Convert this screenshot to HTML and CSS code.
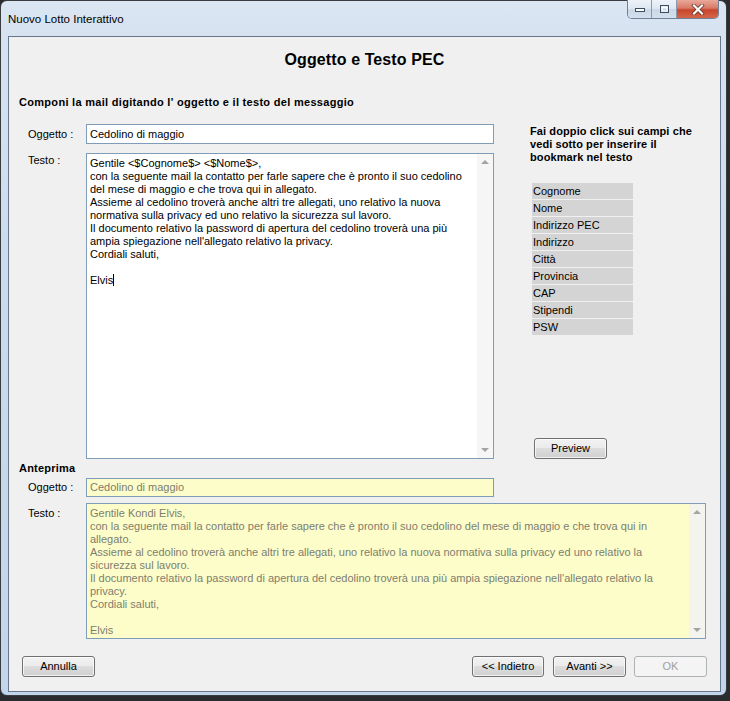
FILE: index.html
```html
<!DOCTYPE html>
<html lang="it">
<head>
<meta charset="utf-8">
<title>Nuovo Lotto Interattivo</title>
<link rel="stylesheet" href="styles.css">
</head>
<body>
<div class="window">
  <div class="titlebar">
    <div class="title">Nuovo Lotto Interattivo</div>
    <div class="caption">
      <div class="cbtn cmin"><svg width="12" height="8" viewBox="0 0 12 8"><rect x="1.5" y="3.5" width="9" height="3" fill="#fff" stroke="#3d4e63"/></svg></div>
      <div class="cbtn cmax"><svg width="11" height="10" viewBox="0 0 11 10"><rect x="1.5" y="1.5" width="8" height="7" fill="none" stroke="#3d4e63"/><rect x="3" y="3.5" width="5" height="3.5" fill="none" stroke="#fff"/></svg></div>
      <div class="cbtn cclose"><svg width="14" height="11" viewBox="0 0 14 11"><path d="M3 1.5 L11 9.5 M11 1.5 L3 9.5" stroke="#5a2a20" stroke-width="3.6" stroke-linecap="square"/><path d="M3 1.5 L11 9.5 M11 1.5 L3 9.5" stroke="#fff" stroke-width="2.2" stroke-linecap="square"/></svg></div>
    </div>
  </div>
  <div class="client">
    <h1 class="heading">Oggetto e Testo PEC</h1>
    <div class="subheading">Componi la mail digitando l' oggetto e il testo del messaggio</div>

    <div class="top">
      <div class="form">
        <div class="row">
          <div class="label lbl-obj">Oggetto :</div>
          <div class="input">Cedolino di maggio</div>
        </div>
        <div class="row row-text">
          <div class="label lbl-text">Testo :</div>
          <div class="textarea">
            <div class="content">
              <div class="line">Gentile &lt;$Cognome$&gt; &lt;$Nome$&gt;,</div>
              <div class="line">con la seguente mail la contatto per farle sapere che è pronto il suo cedolino</div>
              <div class="line">del mese di maggio e che trova qui in allegato.</div>
              <div class="line">Assieme al cedolino troverà anche altri tre allegati, uno relativo la nuova</div>
              <div class="line">normativa sulla privacy ed uno relativo la sicurezza sul lavoro.</div>
              <div class="line">Il documento relativo la password di apertura del cedolino troverà una più</div>
              <div class="line">ampia spiegazione nell'allegato relativo la privacy.</div>
              <div class="line">Cordiali saluti,</div>
              <div class="line"> </div>
              <div class="line"><span class="caret">Elvis</span></div>
            </div>
            <div class="scrollbar"><span class="arrow up"></span><span class="arrow down"></span></div>
          </div>
        </div>
      </div>
      <div class="side">
        <div class="hint">Fai doppio click sui campi che<br>vedi sotto per inserire il<br>bookmark nel testo</div>
        <ul class="fields">
          <li>Cognome</li>
          <li>Nome</li>
          <li>Indirizzo PEC</li>
          <li>Indirizzo</li>
          <li>Città</li>
          <li>Provincia</li>
          <li>CAP</li>
          <li>Stipendi</li>
          <li>PSW</li>
        </ul>
        <div class="btn preview">Preview</div>
      </div>
    </div>

    <div class="section-title">Anteprima</div>
    <div class="row prow-obj">
      <div class="label lbl-pobj">Oggetto :</div>
      <div class="input yellow">Cedolino di maggio</div>
    </div>
    <div class="row prow-text">
      <div class="label lbl-text2">Testo :</div>
      <div class="textarea yellow ptext">
        <div class="content">
          <div class="line">Gentile Kondi Elvis,</div>
          <div class="line">con la seguente mail la contatto per farle sapere che è pronto il suo cedolino del mese di maggio e che trova qui in</div>
          <div class="line">allegato.</div>
          <div class="line">Assieme al cedolino troverà anche altri tre allegati, uno relativo la nuova normativa sulla privacy ed uno relativo la</div>
          <div class="line">sicurezza sul lavoro.</div>
          <div class="line">Il documento relativo la password di apertura del cedolino troverà una più ampia spiegazione nell'allegato relativo la</div>
          <div class="line">privacy.</div>
          <div class="line">Cordiali saluti,</div>
          <div class="line"> </div>
          <div class="line">Elvis</div>
        </div>
        <div class="scrollbar"><span class="arrow up"></span><span class="arrow down"></span></div>
      </div>
    </div>

    <div class="buttons">
      <div class="btn">Annulla</div>
      <div class="spacer"></div>
      <div class="btn btn-back">&lt;&lt; Indietro</div>
      <div class="btn btn-next">Avanti &gt;&gt;</div>
      <div class="btn disabled">OK</div>
    </div>
  </div>
</div>
</body>
</html>
```
FILE: styles.css
```css
* { box-sizing: border-box; }
html, body { margin: 0; padding: 0; }
body {
  width: 730px;
  height: 701px;
  overflow: hidden;
  background: #2a2c2e;
  font-family: "Liberation Sans", Tahoma, sans-serif;
  font-size: 11px;
  color: #000;
}
.window {
  width: 727px;
  height: 696px;
  border: 1px solid #3a3d40;
  border-radius: 7px;
  background: linear-gradient(#dbe6f3, #d6e2f0 36px, #cbdbed 300px, #c3d5ea);
  padding: 0 5px 3px 7px;
  display: flex;
  flex-direction: column;
}
.titlebar {
  height: 35px;
  display: flex;
  align-items: flex-start;
}
.title {
  font-size: 11.5px;
  line-height: 14px;
  margin-top: 11px;
  color: #000;
}
.caption {
  margin-left: auto;
  margin-right: 2px;
  display: flex;
  height: 19px;
  margin-top: -1px;
  border: 1px solid #6f8196;
  border-top: none;
  border-radius: 0 0 5px 5px;
  overflow: hidden;
}
.cbtn {
  height: 100%;
  display: flex;
  align-items: center;
  justify-content: center;
}
.cmin, .cmax {
  background: linear-gradient(#eef3f9, #dde6f1 50%, #cbd7e6 51%, #d5e0ee);
  border-right: 1px solid #8a9bb0;
}
.cmin { width: 24px; }
.cmax { width: 25px; }
.cclose {
  width: 41px;
  background: linear-gradient(#e9a99b, #d87a66 45%, #c7452c 55%, #d5664a);
}
.client {
  flex: 1;
  border: 1px solid #67788b;
  background: #f0f0f0;
  display: flex;
  flex-direction: column;
  padding: 0 13px 13px 0;
}
.heading {
  margin: 13px 0 0;
  font-size: 16px;
  line-height: 20px;
  font-weight: bold;
  text-align: center;
  padding-left: 13px;
  letter-spacing: 0.1px;
}
.subheading {
  margin-top: 26px;
  padding-left: 10px;
  font-weight: bold;
  line-height: 13px;
  letter-spacing: 0.3px;
}
.top {
  margin-top: 15px;
  display: flex;
}
.form { width: 485px; }
.row { display: flex; }
.label {
  width: 77px;
  flex: none;
  padding-left: 19px;
  line-height: 13px;
}
.lbl-obj { line-height: 20px; }
.lbl-text { padding-top: 1px; }
.input {
  width: 408px;
  height: 20px;
  border: 1px solid #7f9db9;
  background: #fff;
  padding-left: 3px;
  line-height: 18px;
}
.row-text { margin-top: 9px; }
.textarea {
  width: 408px;
  height: 306px;
  border: 1px solid #7f9db9;
  background: #fff;
  display: flex;
}
.content {
  flex: 1;
  padding: 3px 0 0 3px;
  line-height: 13px;
  overflow: hidden;
}
.line { white-space: pre; height: 13px; }
.caret { border-right: 1px solid #000; }
.scrollbar {
  width: 16px;
  flex: none;
  background: #f6f6f6;
  position: relative;
}
.arrow {
  position: absolute;
  left: 4px;
  width: 0;
  height: 0;
  border-left: 4px solid transparent;
  border-right: 4px solid transparent;
}
.arrow.up { top: 6px; border-bottom: 4px solid #a3a3a3; }
.arrow.down { bottom: 6px; border-top: 4px solid #a3a3a3; }
.side {
  flex: 1;
  padding-left: 36px;
  display: flex;
  flex-direction: column;
}
.hint {
  font-weight: bold;
  line-height: 13px;
  margin-top: 1px;
  letter-spacing: 0.1px;
}
.fields {
  list-style: none;
  margin: 19px 0 0 2px;
  padding: 0;
  width: 101px;
}
.fields li {
  height: 16px;
  margin-bottom: 1px;
  background: #d4d4d4;
  padding-left: 1px;
  line-height: 16px;
}
.btn {
  width: 73px;
  height: 21px;
  border: 1px solid #707070;
  border-radius: 3px;
  background: linear-gradient(#f2f2f2, #ebebeb 45%, #dddddd 50%, #cfcfcf);
  text-align: center;
  line-height: 19px;
  box-shadow: inset 0 0 0 1px rgba(255,255,255,0.7);
}
.preview {
  margin-top: auto;
  margin-left: 4px;
}
.section-title {
  margin-top: 3px;
  padding-left: 10px;
  font-weight: bold;
  line-height: 13px;
  letter-spacing: 0.2px;
}
.prow-obj { margin-top: 3px; }
.lbl-pobj { line-height: 19px; }
.prow-obj .input { height: 19px; line-height: 17px; }
.yellow {
  background: #fdfdc9;
  color: #7e7e70;
}
.prow-text { margin-top: 6px; }
.lbl-text2 { padding-top: 4px; }
.ptext {
  width: 620px;
  height: 136px;
}
.ptext .scrollbar { background: #f4f4ee; }
.buttons {
  margin-top: 17px;
  display: flex;
  padding-left: 13px;
}
.spacer { flex: 1; }
.btn-back { width: 72px; margin-right: 9px; }
.btn-next { margin-right: 8px; }
.disabled {
  border-color: #adb2b5;
  background: #f4f4f4;
  color: #a0a0a0;
  box-shadow: none;
}
```
